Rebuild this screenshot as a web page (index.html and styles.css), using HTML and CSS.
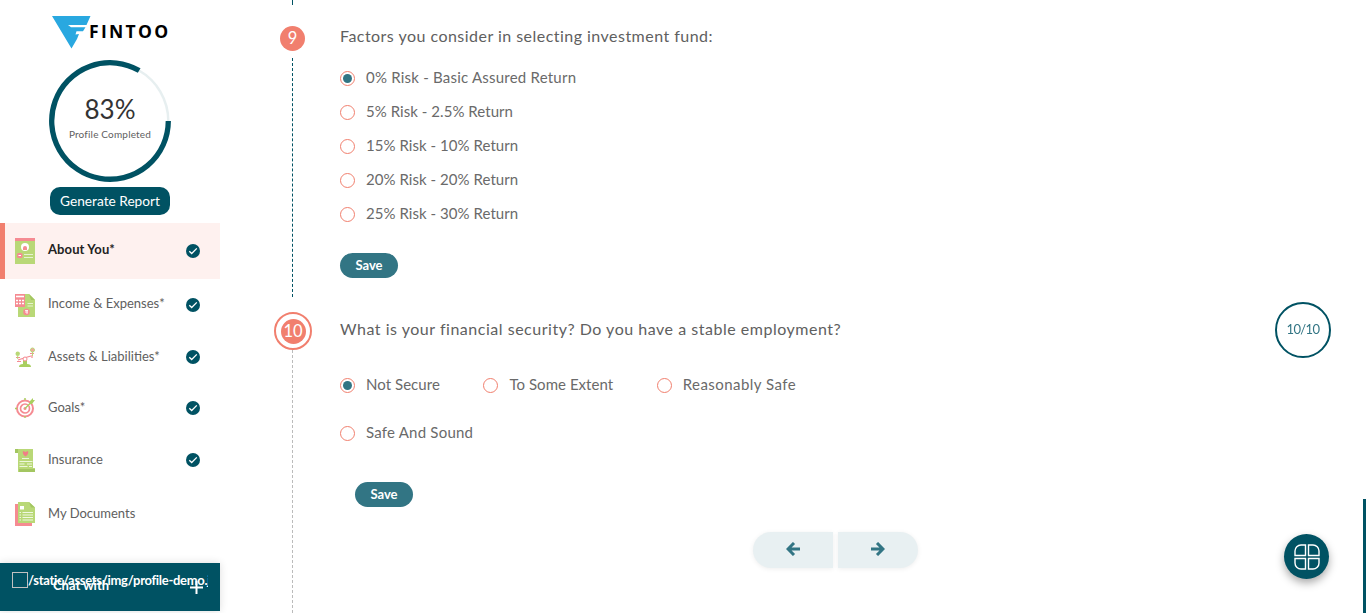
FILE: index.html
```html
<!DOCTYPE html>
<html lang="en">
<head>
<meta charset="utf-8">
<title>Fintoo</title>
<link rel="stylesheet" href="styles.css">
</head>
<body>
<div class="app">
  <aside class="sidebar">
    <div class="brand">
      <svg class="brand-mark" width="40" height="33" viewBox="0 0 40 33"><path fill="#29a8e0" d="M0 0H38.500L34.500 9H16L19 11.300H33.500L31 15.300H24.500L23.500 18.500L27 18L25 23L19.500 32.500Z"/></svg>
      <span class="brand-name">FINTOO</span>
    </div>
    <div class="progress">
      <svg class="ring" width="122" height="122" viewBox="0 0 122 122" fill="none"><path d="M90 10.500A58.300 58.300 0 0 1 119.300 61" stroke="#e7eff0" stroke-width="2.500"/><path d="M119.300 61A58.300 58.300 0 1 1 90.200 10.500" stroke="#005263" stroke-width="5.300"/></svg>
      <div class="progress-text"><span class="percent">83%</span><span class="completed">Profile Completed</span></div>
    </div>
    <button class="report">Generate Report</button>
    <nav class="menu">
      <a class="item active"><svg class="icon" width="20" height="26" viewBox="0 0 20 26"><path fill="#b9d877" d="M0 0h20v26H0z"/><path fill="#f58b92" d="M0 0h20v3H0z"/><circle cx="10" cy="9" r="4" fill="#fff"/><path fill="#f58b92" d="M8 12v-2a2 2 0 1 1 4 0v2z"/><rect x="2" y="15" width="5.500" height="5" rx="1.500" fill="#f58b92"/><path stroke="#e6f3d0" d="M9 16.500h9M9 19.500h9"/><path stroke="#fff" d="M3.500 17.500h2.500"/></svg><span class="label">About You*</span><svg class="check" width="14" height="14" viewBox="0 0 14 14"><circle cx="7" cy="7" r="7" fill="#005263"/><path fill="none" stroke="#fff" stroke-width="1.300" d="M3.300 7.200 5.700 9.500 10.800 4.400"/></svg></a>
      <a class="item"><svg class="icon" width="20" height="24" viewBox="0 0 20 24"><path fill="#b9d877" d="M3 1h11l6 6v17H3z"/><path fill="#a3c661" d="M14 1l6 6h-4z"/><path fill="#f58b92" d="M0 1h10v13H0z"/><path stroke="#fff" stroke-width="1.600" d="M1 3.500h8"/><path stroke="#fff" stroke-width="1.500" stroke-dasharray="2 1" d="M1 7.500h8M1 10.500h8"/><path stroke="#e6f3d0" d="M12.500 10.500H18M12.500 13H18"/><circle cx="11.500" cy="19" r="3.300" fill="#f58b92"/><path stroke="#fff" stroke-width=".8" fill="none" d="M10 17.500h3M10 19h3M12 17v4"/></svg><span class="label">Income &amp; Expenses*</span><svg class="check" width="14" height="14" viewBox="0 0 14 14"><circle cx="7" cy="7" r="7" fill="#005263"/><path fill="none" stroke="#fff" stroke-width="1.300" d="M3.300 7.200 5.700 9.500 10.800 4.400"/></svg></a>
      <a class="item low"><svg class="icon" width="20" height="20" viewBox="0 0 20 20"><path fill="#a9cf5f" d="M4 20q0-3 4-3v-4h4v4q4 0 4 3z"/><path fill="none" stroke="#f58b92" stroke-width="1.200" d="M3 13l6-2 7-2M2 14.500h4M1 10.500h4M15 6.500h4M17 8v3"/><circle cx="10" cy="12" r="2" fill="#fff" stroke="#f58b92"/><circle cx="2.700" cy="6.700" r="2.200" fill="#b9d877"/><circle cx="17.500" cy="3" r="2" fill="#f3a4a0" stroke="#b9d877"/><path stroke="#b9d877" d="M2.700 9v3M17.500 5v4"/></svg><span class="label">Assets &amp; Liabilities*</span><svg class="check" width="14" height="14" viewBox="0 0 14 14"><circle cx="7" cy="7" r="7" fill="#005263"/><path fill="none" stroke="#fff" stroke-width="1.300" d="M3.300 7.200 5.700 9.500 10.800 4.400"/></svg></a>
      <a class="item goals"><svg class="icon" width="20" height="20" viewBox="0 0 20 20"><g fill="none" stroke="#f58b92"><circle cx="10" cy="10.500" r="8" stroke-width="2"/><circle cx="10" cy="10.500" r="4.500" stroke-width="1.700"/></g><circle cx="10" cy="10.500" r="1.500" fill="#f58b92"/><path stroke="#a9cf5f" stroke-width="1.300" d="M10 10.500 16 4.500M0 10.500h2M10 18v2M9 1h2"/><path fill="#a9cf5f" d="M15 3l3-3v2h2l-3 4h-2z"/></svg><span class="label">Goals*</span><svg class="check" width="14" height="14" viewBox="0 0 14 14"><circle cx="7" cy="7" r="7" fill="#005263"/><path fill="none" stroke="#fff" stroke-width="1.300" d="M3.300 7.200 5.700 9.500 10.800 4.400"/></svg></a>
      <a class="item low"><svg class="icon" width="20" height="23" viewBox="0 0 20 23"><path fill="#b9d877" d="M0 0h18v19h2v4H3V4H0z"/><path fill="#a3c661" d="M0 0h3v4H0zM4 20h16v3H4z"/><path fill="#f07f86" d="M8 2l2.500 1L13 2q1 3-2.500 5.500Q7 5 8 2z"/><path stroke="#eef7dc" d="M7 9.500h7M4.500 12.500h13M4.500 15h5M12 15h5M4.500 17.500h8M14 17.500h3"/></svg><span class="label">Insurance</span><svg class="check" width="14" height="14" viewBox="0 0 14 14"><circle cx="7" cy="7" r="7" fill="#005263"/><path fill="none" stroke="#fff" stroke-width="1.300" d="M3.300 7.200 5.700 9.500 10.800 4.400"/></svg></a>
      <a class="item last"><svg class="icon" width="20" height="24" viewBox="0 0 20 24"><path fill="#f58b92" d="M0 2h4v19h13v3H0z"/><path fill="#b9d877" d="M3 0h11l6 5.500V21H3z"/><path fill="#a3c661" d="M14 0l6 5.500h-4z"/><path fill="#fff" d="M5 4h4v3.500H5z"/><path stroke="#f0f8e2" d="M4.500 10.500h1.500M7.500 10.500H18M4.500 13h1.500M7.500 13H18M4.500 15.500h1.500M7.500 15.500H18M4.500 18h1.500M7.500 18H18"/></svg><span class="label">My Documents</span></a>
    </nav>
    <div class="chat">
      <span class="broken"></span><span class="path">/static/assets/img/profile-demo.jpg</span>
      <span class="chat-with">Chat with</span>
      <svg class="plus" width="13" height="13" viewBox="0 0 13 13"><path stroke="#fff" stroke-width="2" d="M6.500 0v13M0 6.500h13"/></svg>
    </div>
  </aside>
  <main class="main">
    <div class="rail">
      <div class="line line-top"></div>
      <span class="badge done">9</span>
      <div class="line line-done"></div>
      <span class="badge-ring"><span class="badge">10</span></span>
      <div class="line line-next"></div>
    </div>
    <div class="questions">
      <section class="question first">
        <h2>Factors you consider in selecting investment fund:</h2>
        <div class="options column">
          <label class="option"><span class="radio on"></span><span class="wide">0% Risk - Basic Assured Return</span></label>
          <label class="option"><span class="radio"></span><span>5% Risk - 2.5% Return</span></label>
          <label class="option"><span class="radio"></span><span>15% Risk - 10% Return</span></label>
          <label class="option"><span class="radio"></span><span>20% Risk - 20% Return</span></label>
          <label class="option"><span class="radio"></span><span>25% Risk - 30% Return</span></label>
        </div>
        <button class="save">Save</button>
      </section>
      <section class="question second">
        <h2 class="long">What is your financial security? Do you have a stable employment?</h2>
        <div class="options grid">
          <label class="option"><span class="radio on"></span><span>Not Secure</span></label>
          <label class="option"><span class="radio"></span><span>To Some Extent</span></label>
          <label class="option"><span class="radio"></span><span class="wider">Reasonably Safe</span></label>
          <label class="option"><span class="radio"></span><span class="wide">Safe And Sound</span></label>
        </div>
        <button class="save">Save</button>
      </section>
      <div class="pager">
        <button class="page prev"><svg width="14" height="14" viewBox="0 0 14 14"><path fill="none" stroke="#327584" stroke-width="3" d="M14 7H3M8 1 2 7l6 6"/></svg></button>
        <button class="page next"><svg width="14" height="14" viewBox="0 0 14 14"><path fill="none" stroke="#327584" stroke-width="3" d="M0 7h11M6 1l6 6-6 6"/></svg></button>
      </div>
    </div>
  </main>
  <div class="counter">10/10</div>
  <button class="fab"><svg width="26" height="26" viewBox="0 0 26 26"><path fill="none" stroke="#fff" stroke-width="1.400" d="M11.500 1v10.500H1V7a6 6 0 0 1 6-6zM14.500 1v10.500H25V7a6 6 0 0 0-6-6zM11.500 25V14.500H1V19a6 6 0 0 0 6 6zM14.500 25V14.500H25V19a6 6 0 0 1-6 6z"/></svg></button>
  <div class="edge"></div>
</div>
</body>
</html>
```
FILE: styles.css
```css
* { box-sizing: border-box; }
body { margin: 0; font-family: Lato, sans-serif; color: #606060; background: #fff; overflow: hidden; }
button { border: 0; padding: 0; font-family: inherit; }

.app { display: flex; width: 1366px; height: 613px; overflow: hidden; }

/* Sidebar */
.sidebar { width: 220px; height: 611px; display: flex; flex-direction: column; align-items: center; flex: none; }
.brand { display: flex; width: 116px; height: 60px; padding-top: 16px; }
.brand-mark { flex: none; }
.brand-name { margin-left: -3px; font: 700 17.500px/30px "Open Sans", sans-serif; letter-spacing: 2.300px; color: #000; }
.progress { display: grid; width: 122px; height: 122px; }
.ring, .progress-text { grid-area: 1 / 1; }
.progress-text { display: flex; flex-direction: column; align-items: center; padding-top: 33px; white-space: nowrap; }
.percent { font-size: 26px; line-height: 32px; color: #333; }
.completed { font-size: 10px; line-height: 19px; letter-spacing: .18px; }
.report { width: 120px; height: 28px; margin-top: 5px; padding-bottom: 1px; border-radius: 10px; background: #005263; color: #fff; font-size: 13.700px; }
.menu { width: 220px; margin-top: 8px; }
.item { display: flex; align-items: center; height: 52px; padding: 0 20px 0 15px; font-size: 13px; }
.item.goals { height: 51px; padding-bottom: 1px; }
.item.last { height: 54px; padding-top: 1px; }
.item.active { height: 56px; padding-left: 10px; border-left: 5px solid #f17f6e; background: #fef1ef; color: #222; font-weight: 700; letter-spacing: .1px; }
.label { flex: 1; margin-left: 13px; padding-bottom: 4px; }
.low .label { padding-bottom: 2px; }
.goals .label, .last .label { padding-bottom: 2px; }
.chat { position: relative; display: flex; width: 220px; height: 48px; margin-top: auto; padding: 9px 12px 0; background: #005263; color: #fff; font-weight: 700; font-size: 13px; line-height: 17px; box-shadow: 0 0 8px #ddd; }
.broken { flex: none; width: 16px; height: 16px; border: 1px solid #c0c0c0; }
.path { overflow: hidden; white-space: nowrap; letter-spacing: -.3px; }
.chat-with { position: absolute; left: 53px; top: 14px; }
.plus { position: absolute; left: 190px; top: 18px; }

/* Question timeline */
.main { display: flex; width: 1000px; }
.rail { width: 38px; margin-left: 54px; display: flex; flex-direction: column; align-items: center; }
.line { width: 1px; margin-right: 1px; border-left: 1px dashed #005263; }
.line-top { height: 5px; margin-bottom: 21px; }
.line-done { height: 239px; margin: 7px 1px 15px 0; }
.line-next { flex: 1; border-color: #bbb; }
.badge { width: 25px; height: 25px; flex: none; display: flex; align-items: center; justify-content: center; padding-bottom: 1px; border-radius: 50%; background: #f17f6e; color: #fff; font-size: 16.500px; }
.badge.done { margin-right: 1px; }
.badge-ring { display: flex; padding: 4.500px; border: 2px solid #f17f6e; border-radius: 50%; }

.questions { margin-left: 28px; width: 640px; padding-top: 25px; }
h2 { margin: 0; font-size: 16px; line-height: 22px; font-weight: 400; letter-spacing: .47px; white-space: nowrap; }
h2.long { letter-spacing: .52px; }
.option { display: flex; align-items: center; gap: 11px; height: 34px; font-size: 15px; letter-spacing: .05px; color: #6a6a6a; white-space: nowrap; }
.option > span:last-child { padding-bottom: 2px; }
.wide { letter-spacing: .22px; }
.wider { letter-spacing: .45px; }
.radio { flex: none; width: 15px; height: 15px; border: 1px solid #f17f6e; border-radius: 50%; display: grid; place-items: center; }
.radio.on::after { content: ""; width: 9px; height: 9px; border-radius: 50%; background: #327584; }
.column { margin-top: 14px; }
.save { display: block; width: 58px; height: 25px; padding-bottom: 1px; border-radius: 13px; background: #327584; color: #fff; font-weight: 700; font-size: 13px; }
.first .save { margin-top: 22px; }
.second { margin-top: 40px; }
.grid { display: flex; flex-wrap: wrap; margin-top: 28px; column-gap: 43.500px; row-gap: 14px; width: 560px; }
.second .save { margin: 32px 0 0 15px; }

.pager { display: flex; gap: 5px; margin: 25px 0 0 413px; }
.page { width: 80px; height: 36px; background: #e8f0f2; box-shadow: 0 1px 5px #eee; }
.prev { border-radius: 18px 0 0 18px; }
.next { border-radius: 0 18px 18px 0; }

/* Floating controls */
.counter { position: fixed; left: 1275px; top: 302px; width: 56px; height: 56px; padding-bottom: 2px; display: grid; place-items: center; border: 2px solid #005263; border-radius: 50%; color: #327584; font-size: 13px; letter-spacing: -.6px; }
.fab { position: fixed; left: 1284px; top: 534px; width: 45px; height: 45px; display: grid; place-items: center; border-radius: 50%; background: #005263; box-shadow: 0 4px 8px #aaa; }
.edge { position: fixed; right: 0; top: 499px; width: 3px; height: 114px; background: #005263; }
```
